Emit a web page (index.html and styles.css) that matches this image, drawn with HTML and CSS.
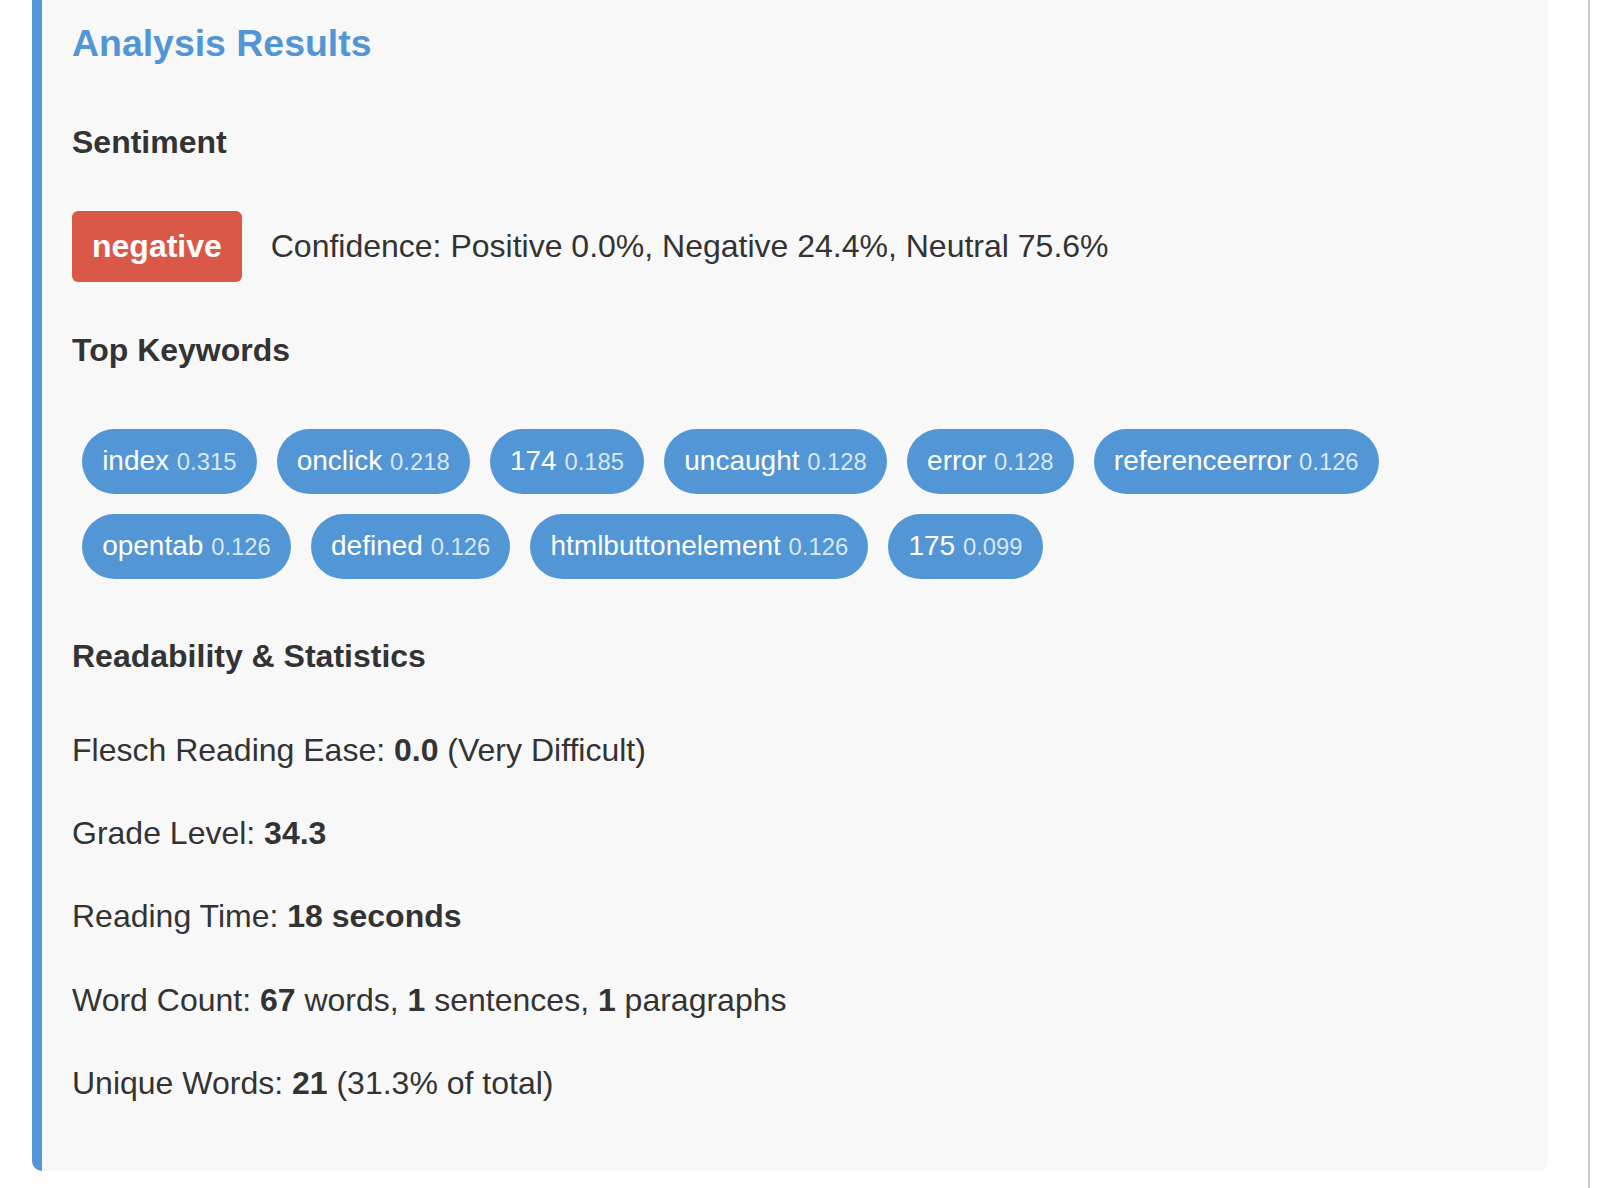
FILE: index.html
```html
<!DOCTYPE html>
<html lang="en">
<head>
<meta charset="utf-8">
<title>Analysis Results</title>
<link rel="stylesheet" href="styles.css">
</head>
<body>
<div class="page">
  <main class="main">
    <section class="card">
      <h3 class="title">Analysis Results</h3>

      <h4 class="section-title">Sentiment</h4>
      <p class="sentiment"><span class="badge badge-negative">negative</span> Confidence: Positive 0.0%, Negative 24.4%, Neutral 75.6%</p>

      <h4 class="section-title">Top Keywords</h4>
      <div class="tags">
        <span class="tag">index <span class="score">0.315</span></span>
        <span class="tag">onclick <span class="score">0.218</span></span>
        <span class="tag">174 <span class="score">0.185</span></span>
        <span class="tag">uncaught <span class="score">0.128</span></span>
        <span class="tag">error <span class="score">0.128</span></span>
        <span class="tag">referenceerror <span class="score">0.126</span></span>
        <span class="tag">opentab <span class="score">0.126</span></span>
        <span class="tag">defined <span class="score">0.126</span></span>
        <span class="tag">htmlbuttonelement <span class="score">0.126</span></span>
        <span class="tag">175 <span class="score">0.099</span></span>
      </div>

      <h4 class="section-title">Readability &amp; Statistics</h4>
      <p class="stat">Flesch Reading Ease: <strong>0.0</strong> (Very Difficult)</p>
      <p class="stat">Grade Level: <strong>34.3</strong></p>
      <p class="stat">Reading Time: <strong>18 seconds</strong></p>
      <p class="stat">Word Count: <strong>67</strong> words, <strong>1</strong> sentences, <strong>1</strong> paragraphs</p>
      <p class="stat">Unique Words: <strong>21</strong> (31.3% of total)</p>
    </section>
  </main>
  <aside class="side"></aside>
</div>
</body>
</html>
```

FILE: styles.css
```css
html, body {
  margin: 0;
  padding: 0;
  background: #ffffff;
}

body {
  font-family: "Liberation Sans", Arial, Helvetica, sans-serif;
  font-size: 32px;
  line-height: 1.6;
  color: #333333;
  overflow: hidden;
}

.page {
  display: flex;
  align-items: stretch;
  min-height: 1188px;
}

.main {
  flex: 1;
  padding: 0 40px 0 32px;
}

.side {
  width: 22px;
  border-left: 2px solid #c9c9c9;
}

.card {
  margin-top: -53px;
  background: #f8f8f8;
  border-left: 10px solid #5296d5;
  border-radius: 10px;
  padding: 30px;
}

.title {
  font-size: 37.44px;
  font-weight: bold;
  color: #5296d5;
  margin: 37.44px 0;
}

.section-title {
  font-size: 32px;
  font-weight: bold;
  margin: 42.56px 0;
}

.sentiment {
  margin: 32px 0;
  padding-bottom: 0.75px;
}

.badge {
  display: inline-block;
  padding: 10px 20px;
  border-radius: 6px;
  color: #ffffff;
  font-weight: bold;
  margin-right: 20px;
}

.badge-negative {
  background: #d95847;
}

.tags {
  display: flex;
  flex-wrap: wrap;
}

.tag {
  display: inline-block;
  margin: 10px;
  padding: 10px 20.15px;
  line-height: 44px;
  font-size: 28px;
  color: #ffffff;
  background: #5296d5;
  border-radius: 40px;
  white-space: nowrap;
}

.score {
  font-size: 0.85em;
  color: rgba(255, 255, 255, 0.78);
}

.stat {
  margin: 32px 0;
}

.stat strong {
  font-weight: bold;
}
```
